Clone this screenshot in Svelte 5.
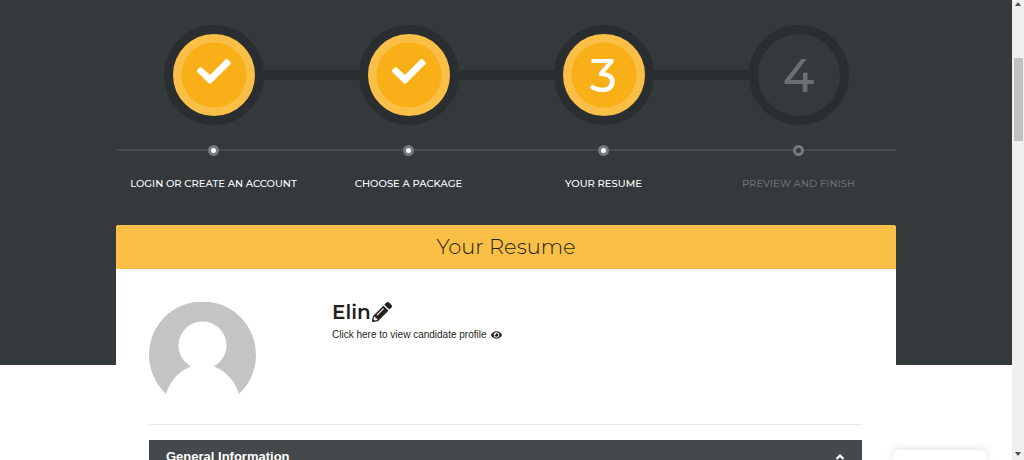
<script>
  const steps = [
    { number: 1, label: 'Login or create an account', state: 'done' },
    { number: 2, label: 'Choose a package', state: 'done' },
    { number: 3, label: 'Your resume', state: 'current' },
    { number: 4, label: 'Preview and finish', state: 'pending' }
  ];
</script>

<div class="page">
  <main>
    <section class="hero">
      <ol class="steps">
        {#each steps as step}
          <li class={step.state}>
            <div class="track">
              <span class="bar"></span>
              <div class="disc">
                {#if step.state === 'done'}
                  <svg width="34" height="34" viewBox="0 0 34 34" aria-hidden="true">
                    <path
                      d="M1.300 12.900 L3.600 10.600 L13 18.900 L29.700 2.300 L32.400 5.200 L13 24.600 Z"
                      fill="#fff"
                      stroke="#fff"
                      stroke-width="2.800"
                      stroke-linejoin="round"
                    />
                  </svg>
                {:else}
                  {step.number}
                {/if}
              </div>
              <span class="bar"></span>
            </div>
            <div class="rule"><span class="dot"></span></div>
            <div class="label">{step.label}</div>
          </li>
        {/each}
      </ol>
    </section>

    <section class="card">
      <h1>Your Resume</h1>
      <div class="body">
        <div class="profile">
          <svg class="avatar" width="107" height="107" viewBox="0 0 107 107" role="img" aria-label="Elin">
            <path
              fill="#c4c4c4"
              d="M17 92 A53.500 53.500 0 1 1 90 92 C86 79 77 69 65 64.500 A24 24 0 1 0 42 64.500 C30 69 21 79 17 92 Z"
            />
          </svg>
          <div class="who">
            <h2>
              Elin<button type="button" aria-label="Edit name">
                <svg width="20" height="20" viewBox="0 0 512 512" aria-hidden="true">
                  <path
                    fill="currentColor"
                    d="M497.900 142.100l-46.100 46.100c-4.700 4.700-12.300 4.700-17 0l-111-111c-4.700-4.700-4.700-12.300 0-17l46.100-46.100c18.700-18.700 49.100-18.700 67.900 0l60.100 60.100c18.800 18.700 18.800 49.100 0 67.900zM284.200 99.800L21.600 362.400.400 483.900c-2.900 16.400 11.400 30.600 27.800 27.800l121.500-21.300 262.600-262.600c4.700-4.700 4.700-12.300 0-17l-111-111c-4.800-4.700-12.400-4.700-17.100 0zM124.100 339.900c-5.500-5.500-5.500-14.300 0-19.800l154-154c5.500-5.500 14.300-5.500 19.800 0s5.500 14.300 0 19.800l-154 154c-5.500 5.500-14.300 5.500-19.800 0zM88 424h48v36.300l-64.500 11.300-31.100-31.100L51.700 376H88v48z"
                  />
                </svg>
              </button>
            </h2>
            <a href="#profile">
              Click here to view candidate profile
              <svg width="11" height="10" viewBox="0 0 576 512" aria-hidden="true">
                <path
                  fill="currentColor"
                  d="M572.520 241.400C518.290 135.590 410.930 64 288 64S57.680 135.640 3.480 241.410a32.350 32.350 0 0 0 0 29.190C57.710 376.410 165.070 448 288 448s230.320-71.640 284.520-177.410a32.350 32.350 0 0 0 0-29.190zM288 400a144 144 0 1 1 144-144 143.930 143.930 0 0 1-144 144zm0-240a95.310 95.310 0 0 0-25.310 3.790 47.850 47.850 0 0 1-66.900 66.900A95.780 95.780 0 1 0 288 160z"
                />
              </svg>
            </a>
          </div>
        </div>
        <hr />
        <button type="button" class="panel" aria-expanded="true">
          General Information
          <svg width="10" height="8" viewBox="0 0 10 8" aria-hidden="true">
            <path d="M1.500 6 L5 2.500 L8.500 6" fill="none" stroke="#fff" stroke-width="2.200" />
          </svg>
        </button>
      </div>
    </section>
  </main>

  <div class="scrollbar" aria-hidden="true">
    <svg width="6" height="4" viewBox="0 0 6 4"><path d="M0 4 L3 0 L6 4 Z" fill="#505050" /></svg>
    <div class="thumb"></div>
    <svg width="6" height="4" viewBox="0 0 6 4"><path d="M0 0 L3 4 L6 0 Z" fill="#505050" /></svg>
  </div>

  <div class="chat"></div>
</div>

<style>
  :global(body) {
    margin: 0;
    background: #fff;
  }
  .page {
    display: flex;
    height: 100vh;
    overflow: hidden;
    font-family: 'Liberation Sans', Arial, sans-serif;
    color: #231f20;
  }
  main {
    flex: 1;
    min-width: 0;
  }
  .hero {
    background: #34393c;
    padding: 25px 0 173px;
  }
  .steps,
  .card {
    width: calc(100% - 32px);
    max-width: 780px;
    margin: 0 auto;
  }
  .steps {
    display: grid;
    grid-template-columns: repeat(4, 1fr);
    padding: 0;
    list-style: none;
    text-align: center;
  }
  .track {
    display: flex;
    align-items: center;
  }
  .bar {
    flex: 1;
    height: 10px;
    background: #2a2e30;
  }
  li:first-child .bar:first-child,
  li:last-child .bar:last-child {
    background: none;
  }
  .disc {
    box-sizing: border-box;
    width: 100px;
    height: 100px;
    border: 9px solid #2a2e30;
    border-radius: 50%;
    display: flex;
    align-items: center;
    justify-content: center;
    background: radial-gradient(circle, #f9af18 32px, #fabf46 33px);
    background-origin: border-box;
    color: #fff;
    font: 500 47px/1 Montserrat, Inter, sans-serif;
  }
  .pending .disc {
    background: none;
    color: #6c7072;
  }
  .rule {
    display: flex;
    align-items: center;
    justify-content: center;
    height: 12px;
    margin-top: 19px;
    background: linear-gradient(#474b4e, #474b4e) center / 100% 2px no-repeat;
  }
  .dot {
    box-sizing: border-box;
    width: 11px;
    height: 11px;
    border: 3px solid #77797b;
    border-radius: 50%;
    background: #fff;
  }
  .pending .dot {
    background: #34393c;
  }
  .label {
    margin-top: 20px;
    font: 500 10px/16px Montserrat, Inter, sans-serif;
    text-transform: uppercase;
    color: #fff;
  }
  .pending .label {
    color: #6c7072;
  }
  .card {
    margin-top: -140px;
    border-radius: 3px 3px 0 0;
    background: #fff;
    overflow: hidden;
  }
  h1 {
    margin: 0;
    background: #fabf46;
    text-align: center;
    font: 300 21px/44px Montserrat, Inter, sans-serif;
  }
  .body {
    padding: 33px 34px 0 33px;
  }
  .profile {
    display: grid;
    grid-template-columns: 107px 1fr;
    gap: 76px;
  }
  .avatar {
    display: block;
  }
  h2 {
    display: flex;
    align-items: center;
    gap: 1px;
    margin: 0;
    font: 600 20px/20px Montserrat, Inter, sans-serif;
  }
  h2 button {
    display: flex;
    padding: 0;
    border: 0;
    background: none;
    color: inherit;
  }
  a {
    display: flex;
    align-items: center;
    gap: 4px;
    margin-top: 5px;
    font-size: 10px;
    line-height: 16px;
    color: #231f20;
    text-decoration: none;
  }
  hr {
    margin: 15px 0;
    border: 0;
    border-top: 1px solid #e8e8e8;
  }
  .panel {
    display: flex;
    align-items: center;
    justify-content: space-between;
    width: 100%;
    height: 34px;
    padding: 0 17px;
    border: 0;
    background: #44494b;
    color: #fff;
    font: bold 13px/16px 'Liberation Sans', Arial, sans-serif;
  }
  .scrollbar {
    display: flex;
    flex-direction: column;
    align-items: center;
    width: 12px;
    box-sizing: border-box;
    padding: 2px 0 4px;
    background: #f0f0f0;
  }
  .thumb {
    width: 9px;
    height: 83px;
    margin: 52px 0 auto;
    background: #c1c1c1;
  }
  .chat {
    position: fixed;
    right: 38px;
    bottom: 0;
    width: 93px;
    height: 10px;
    border-radius: 6px 6px 0 0;
    background: #fff;
    box-shadow: 0 0 10px rgba(0, 0, 0, 0.16);
  }
</style>
